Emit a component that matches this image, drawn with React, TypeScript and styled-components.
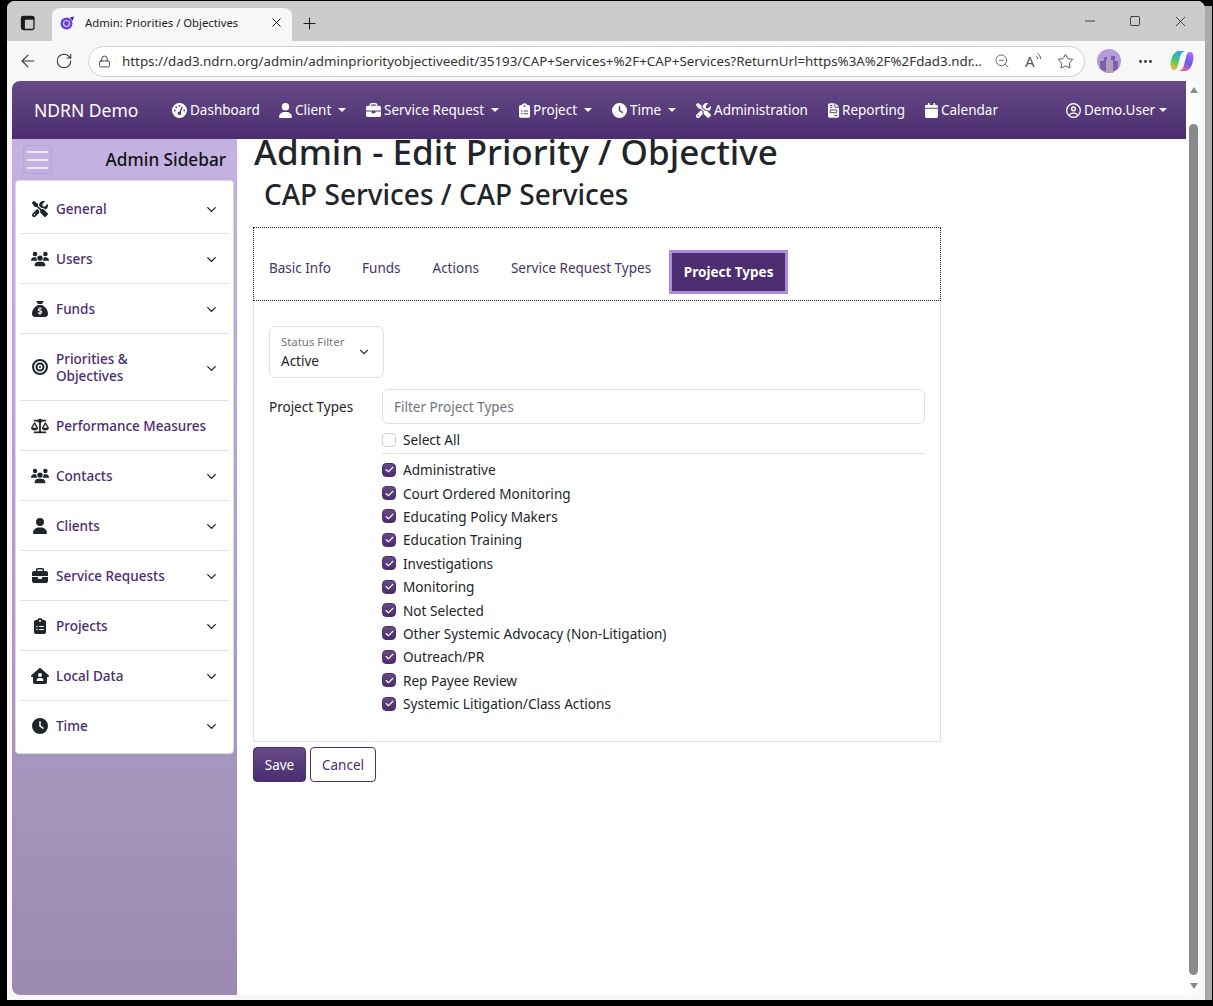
import React from "react";
import styled, { createGlobalStyle } from "styled-components";
import {
  FaGaugeHigh,
  FaUser,
  FaUsers,
  FaBriefcase,
  FaClipboardList,
  FaClock,
  FaScrewdriverWrench,
  FaFileInvoice,
  FaCalendar,
  FaRegCircleUser,
  FaBullseye,
  FaScaleBalanced,
  FaHouseUser,
  FaSackDollar,
  FaCheck,
} from "react-icons/fa6";
import {
  ArrowLeft,
  RotateCw,
  Lock,
  ZoomOut,
  Star,
  Plus,
  X,
  Minus,
  Square,
  ChevronDown,
  MoreHorizontal,
} from "lucide-react";

const FONT = `"Noto Sans", "Open Sans", sans-serif`;

const GlobalStyle = createGlobalStyle`
  html, body {
    margin: 0;
    height: 100%;
    overflow: hidden;
    background: #000;
  }
  body {
    font-family: ${FONT};
    color: #212529;
  }
  * { box-sizing: border-box; }
`;

const navItems = [
  { icon: <FaGaugeHigh />, label: "Dashboard", caret: false, width: 107, iconWidth: 15 },
  { icon: <FaUser />, label: "Client", caret: true, width: 87, iconWidth: 13 },
  { icon: <FaBriefcase />, label: "Service Request", caret: true, width: 153, iconWidth: 15 },
  { icon: <FaClipboardList />, label: "Project", caret: true, width: 93, iconWidth: 11 },
  { icon: <FaClock />, label: "Time", caret: true, width: 84, iconWidth: 15 },
  { icon: <FaScrewdriverWrench />, label: "Administration", caret: false, width: 132, iconWidth: 15 },
  { icon: <FaFileInvoice />, label: "Reporting", caret: false, width: 97, iconWidth: 11 },
  { icon: <FaCalendar />, label: "Calendar", caret: false, width: 90, iconWidth: 13 },
];

const sideItems = [
  { icon: <FaScrewdriverWrench />, label: "General", chevron: true },
  { icon: <FaUsers />, label: "Users", chevron: true },
  { icon: <FaSackDollar />, label: "Funds", chevron: true },
  { icon: <FaBullseye />, label: "Priorities & Objectives", chevron: true, tall: true },
  { icon: <FaScaleBalanced />, label: "Performance Measures", chevron: false },
  { icon: <FaUsers />, label: "Contacts", chevron: true },
  { icon: <FaUser />, label: "Clients", chevron: true },
  { icon: <FaBriefcase />, label: "Service Requests", chevron: true },
  { icon: <FaClipboardList />, label: "Projects", chevron: true },
  { icon: <FaHouseUser />, label: "Local Data", chevron: true },
  { icon: <FaClock />, label: "Time", chevron: true },
];

const projectTypes = [
  "Administrative",
  "Court Ordered Monitoring",
  "Educating Policy Makers",
  "Education Training",
  "Investigations",
  "Monitoring",
  "Not Selected",
  "Other Systemic Advocacy (Non-Litigation)",
  "Outreach/PR",
  "Rep Payee Review",
  "Systemic Litigation/Class Actions",
];

const App: React.FC = () => {
  return (
    <>
      <GlobalStyle />
      <Desktop>
        <BrowserWindow>
          <TabStrip>
            <TabActions>
              <svg width="16" height="16" viewBox="0 0 16 16" fill="none">
                <rect x="1.5" y="1.5" width="12.5" height="13" rx="2" stroke="#1b1b1b" strokeWidth="1.3" />
                <rect x="1.5" y="1.5" width="12.5" height="3.2" fill="#1b1b1b" />
                <rect x="1.5" y="1.5" width="3.4" height="13" fill="#1b1b1b" />
              </svg>
            </TabActions>
            <Tab>
              <svg width="16" height="16" viewBox="0 0 16 16">
                <circle cx="7.5" cy="8.5" r="6" fill="#6a3fd8" />
                <circle cx="7.5" cy="8.5" r="3" fill="none" stroke="#d7c8ff" strokeWidth="1.2" />
                <path d="M11 2.5 L15 1.5 L13.5 6 Z" fill="#3d1f8f" />
              </svg>
              <TabTitle>Admin: Priorities / Objectives</TabTitle>
              <X size={15} strokeWidth={1.6} color="#1b1b1b" />
            </Tab>
            <NewTab>
              <Plus size={19} strokeWidth={1.3} color="#1b1b1b" />
            </NewTab>
            <WindowButtons>
              <Minus size={16} strokeWidth={1.2} color="#1b1b1b" />
              <Square size={12} strokeWidth={1.6} color="#1b1b1b" />
              <X size={17} strokeWidth={1.1} color="#1b1b1b" />
            </WindowButtons>
          </TabStrip>
          <Toolbar>
            <ToolButton>
              <ArrowLeft size={20} strokeWidth={1.3} color="#333" />
            </ToolButton>
            <ToolButton>
              <RotateCw size={18} strokeWidth={1.4} color="#333" />
            </ToolButton>
            <AddressBar>
              <Lock size={13} strokeWidth={1.6} color="#333" />
              <Url>https://dad3.ndrn.org/admin/adminpriorityobjectiveedit/35193/CAP+Services+%2F+CAP+Services?ReturnUrl=https%3A%2F%2Fdad3.ndr...</Url>
              <AddressIcons>
                <ZoomOut size={16} strokeWidth={1.3} color="#555" />
                <ReadAloud>
                  A
                  <svg width="7" height="9" viewBox="0 0 7 9" fill="none" stroke="#555" strokeWidth="1">
                    <path d="M1 4c1 .5 1.5 1.5 1.5 3" />
                    <path d="M2.5 1.5c2 1 3 3 3 5.5" />
                  </svg>
                </ReadAloud>
                <Star size={17} strokeWidth={1.3} color="#444" />
              </AddressIcons>
            </AddressBar>
            <Avatar>
              <svg width="24" height="24" viewBox="0 0 24 24">
                <circle cx="12" cy="12" r="12" fill="#b49ad6" />
                <path d="M3 12h4V8h3v3h4V7h4v5h3v7a12 12 0 0 1-18 0z" fill="#7d5fa8" />
                <rect x="9" y="11" width="7" height="13" fill="#b59fc0" />
              </svg>
            </Avatar>
            <MoreHorizontal size={17} strokeWidth={2} color="#333" />
            <Copilot>
              <svg width="24" height="24" viewBox="0 0 24 24">
                <defs>
                  <linearGradient id="copLeft" x1="0.6" y1="0" x2="0.3" y2="1">
                    <stop offset="0" stopColor="#27a5f0" />
                    <stop offset="0.5" stopColor="#45c96b" />
                    <stop offset="1" stopColor="#f4b93e" />
                  </linearGradient>
                  <linearGradient id="copRight" x1="0.7" y1="0" x2="0.3" y2="1">
                    <stop offset="0" stopColor="#b06af0" />
                    <stop offset="0.5" stopColor="#6a5cf0" />
                    <stop offset="1" stopColor="#f05fa0" />
                  </linearGradient>
                </defs>
                <path d="M8 2h7c-3 1-4.5 3-5 6l-2 8c-.5 3-2 5-4 5-2 0-3.5-2-3.5-4.5C.5 11 3 3 8 2z" fill="url(#copLeft)" />
                <path d="M16 22H9c3-1 4.5-3 5-6l2-8c.5-3 2-5 4-5 2 0 3.5 2 3.5 4.5C23.5 13 21 21 16 22z" fill="url(#copRight)" />
              </svg>
            </Copilot>
          </Toolbar>
          <Page>
            <PageColumn>
              <NavBar>
                <Brand>NDRN Demo</Brand>
                <NavList>
                  {navItems.map((item) => (
                    <NavItem key={item.label} $width={item.width} $iconWidth={item.iconWidth}>
                      {item.icon}
                      <span>{item.label}</span>
                      {item.caret && <Caret $gap={4} />}
                    </NavItem>
                  ))}
                </NavList>
                <UserMenu>
                  <FaRegCircleUser />
                  <span>Demo.User</span>
                  <Caret $gap={1} />
                </UserMenu>
              </NavBar>
              <Body>
                <Sidebar>
                  <SidebarHead>
                    <Burger>
                      <i />
                      <i />
                      <i />
                    </Burger>
                    <SidebarTitle>Admin Sidebar</SidebarTitle>
                  </SidebarHead>
                  <SideCard>
                    {sideItems.map((item) => (
                      <SideItem key={item.label} $tall={!!item.tall}>
                        <SideIcon>{item.icon}</SideIcon>
                        <SideLabel $chevron={item.chevron}>{item.label}</SideLabel>
                        {item.chevron && <ChevronDown size={15} strokeWidth={2.2} color="#212529" />}
                      </SideItem>
                    ))}
                  </SideCard>
                </Sidebar>
                <Main>
                  <Title>Admin - Edit Priority / Objective</Title>
                  <Subtitle>CAP Services / CAP Services</Subtitle>
                  <TabBox>
                    <PageTab>Basic Info</PageTab>
                    <PageTab>Funds</PageTab>
                    <PageTab>Actions</PageTab>
                    <PageTab>Service Request Types</PageTab>
                    <ActiveTab>Project Types</ActiveTab>
                  </TabBox>
                  <Panel>
                    <SelectBox>
                      <SelectText>
                        <SelectLabel>Status Filter</SelectLabel>
                        <SelectValue>Active</SelectValue>
                      </SelectText>
                      <ChevronDown size={14} strokeWidth={2} color="#343a40" />
                    </SelectBox>
                    <TypesRow>
                      <TypesLabel>Project Types</TypesLabel>
                      <TypesColumn>
                        <FilterInput placeholder="Filter Project Types" />
                        <SelectAllRow>
                          <CheckBox $checked={false} />
                          <CheckText>Select All</CheckText>
                        </SelectAllRow>
                        <CheckList>
                          {projectTypes.map((name) => (
                            <CheckRow key={name}>
                              <CheckBox $checked>
                                <FaCheck size={9} color="#fff" />
                              </CheckBox>
                              <CheckText>{name}</CheckText>
                            </CheckRow>
                          ))}
                        </CheckList>
                      </TypesColumn>
                    </TypesRow>
                  </Panel>
                  <Actions>
                    <SaveButton>Save</SaveButton>
                    <CancelButton>Cancel</CancelButton>
                  </Actions>
                </Main>
              </Body>
            </PageColumn>
            <ScrollBar>
              <ArrowUp />
              <Thumb />
              <ArrowDown />
            </ScrollBar>
          </Page>
        </BrowserWindow>
        <WindowEdge />
      </Desktop>
    </>
  );
};

const Desktop = styled.div`
  display: flex;
  height: 1000px;
  padding-left: 7px;
`;

const BrowserWindow = styled.div`
  width: 1198px;
  height: 999px;
  margin-top: 1px;
  display: flex;
  flex-direction: column;
  background: #f7f7f7;
  border-radius: 8px 8px 0 0;
  overflow: hidden;
`;

const WindowEdge = styled.div`
  width: 7px;
  margin-top: 6px;
  background: #a9a9a9;
`;

const TabStrip = styled.div`
  height: 40px;
  flex: none;
  display: flex;
  align-items: flex-end;
  background: #cccccc;
`;

const TabActions = styled.div`
  width: 45px;
  height: 33px;
  display: flex;
  align-items: center;
  justify-content: center;
  padding: 0 4px 3px 0;
`;

const Tab = styled.div`
  width: 240px;
  height: 33px;
  display: flex;
  align-items: center;
  gap: 10px;
  padding: 0 8px 4px 7px;
  background: #f7f7f7;
  border-radius: 8px 8px 0 0;
  svg {
    flex: none;
  }
`;

const TabTitle = styled.span`
  flex: 1;
  font-size: 11.3px;
  color: #1b1b1b;
  white-space: nowrap;
`;

const NewTab = styled.div`
  height: 33px;
  display: flex;
  align-items: center;
  padding: 0 0 3px 8px;
`;

const WindowButtons = styled.div`
  margin-left: auto;
  height: 40px;
  width: 123px;
  display: flex;
  align-items: center;
  justify-content: space-between;
  padding: 0 16px 0 0;
`;

const Toolbar = styled.div`
  height: 40px;
  flex: none;
  display: flex;
  align-items: center;
  background: #f7f7f7;
  padding: 0 7px 0 3px;
`;

const ToolButton = styled.div`
  width: 36px;
  display: flex;
  justify-content: center;
`;

const AddressBar = styled.div`
  width: 997px;
  height: 31px;
  margin: 0 12px 0 6px;
  display: flex;
  align-items: center;
  gap: 11px;
  padding: 0 10px 0 9px;
  background: #fff;
  border: 1px solid #cfcfcf;
  border-radius: 16px;
`;

const Url = styled.span`
  flex: 1;
  font-size: 13.35px;
  color: #333;
  white-space: nowrap;
  overflow: hidden;
`;

const AddressIcons = styled.div`
  display: flex;
  align-items: center;
  gap: 15px;
  svg {
    flex: none;
  }
`;

const ReadAloud = styled.span`
  display: flex;
  align-items: flex-start;
  width: 17px;
  font-size: 15px;
  line-height: 18px;
  color: #555;
`;

const Avatar = styled.div`
  height: 24px;
  margin: 0 16px 0 0;
`;

const Copilot = styled.div`
  height: 24px;
  margin-left: 16px;
`;

const Page = styled.div`
  flex: 1;
  display: flex;
  min-height: 0;
  margin: 0 6px 5px 5px;
  background: #fff;
  border-radius: 8px 8px 0 8px;
  overflow: hidden;
`;

const PageColumn = styled.div`
  flex: 1;
  display: flex;
  flex-direction: column;
  min-width: 0;
`;

const NavBar = styled.div`
  height: 58px;
  flex: none;
  display: flex;
  align-items: center;
  padding: 0 21px 0 22px;
  background: linear-gradient(180deg, #664a85, #4b2d70);
  color: #fff;
`;

const Brand = styled.div`
  width: 138px;
  font-size: 17.5px;
`;

const NavList = styled.div`
  display: flex;
  align-items: center;
`;

const NavItem = styled.div<{ $width: number; $iconWidth?: number }>`
  width: ${(p) => p.$width}px;
  display: flex;
  align-items: center;
  gap: 3px;
  font-size: 13.5px;
  white-space: nowrap;
  svg {
    height: 15px;
    width: ${(p) => p.$iconWidth ?? 15}px;
    flex: none;
  }
`;

const Caret = styled.i<{ $gap: number }>`
  display: inline-block;
  margin-left: ${(p) => p.$gap}px;
  border-top: 4px solid #fff;
  border-left: 4px solid transparent;
  border-right: 4px solid transparent;
`;

const UserMenu = styled(NavItem).attrs({ $width: 99 })`
  margin-left: auto;
`;

const Body = styled.div`
  flex: 1;
  display: flex;
  min-height: 0;
`;

const Sidebar = styled.aside`
  width: 225px;
  flex: none;
  background: linear-gradient(180deg, #c5b2e2, #9b8bb0);
`;

const SidebarHead = styled.div`
  height: 41px;
  display: flex;
  align-items: center;
  justify-content: space-between;
  padding: 0 11px 0 11px;
`;

const Burger = styled.div`
  width: 29px;
  height: 29px;
  display: flex;
  flex-direction: column;
  justify-content: center;
  gap: 6px;
  padding: 0 3px;
  border: 1px solid #b7a3d6;
  border-radius: 4px;
  i {
    display: block;
    height: 2px;
    background: #efe9f7;
  }
`;

const SidebarTitle = styled.div`
  font-size: 17.2px;
  font-weight: 500;
  color: #111;
`;

const SideCard = styled.div`
  width: 219px;
  margin-left: 3px;
  padding: 3px 4px 2px;
  background: #fff;
  border: 1px solid #ded8e8;
  border-radius: 4px;
`;

const SideItem = styled.div<{ $tall: boolean }>`
  height: ${(p) => (p.$tall ? 67 : 50)}px;
  display: flex;
  align-items: center;
  padding: 2px 10px 0 11px;
  border-bottom: 1px solid #dee2e6;
  &:last-child {
    padding-top: 1px;
    border-bottom: 0;
  }
`;

const SideIcon = styled.span`
  width: 25px;
  flex: none;
  display: flex;
  justify-content: flex-start;
  color: #212529;
  margin-top: -2px;
  svg {
    height: 16px;
    width: 18px;
  }
`;

const SideLabel = styled.span<{ $chevron: boolean }>`
  flex: 1;
  font-size: 13.5px;
  font-weight: 500;
  line-height: 17px;
  color: #4b2d70;
  padding-right: ${(p) => (p.$chevron ? 30 : 0)}px;
  white-space: ${(p) => (p.$chevron ? "normal" : "nowrap")};
`;

const Main = styled.main`
  flex: 1;
  min-width: 0;
  height: 100%;
  padding: 0 0 0 16px;
  overflow: hidden;
`;

const Title = styled.h1`
  margin: -13px 0 0 1px;
  height: 52px;
  font-size: 35px;
  line-height: 52px;
  font-weight: 500;
  color: #212529;
  white-space: nowrap;
`;

const Subtitle = styled.h2`
  margin: -3px 0 13px 11px;
  height: 39px;
  font-size: 28px;
  line-height: 39px;
  font-weight: 500;
  color: #212529;
`;

const TabBox = styled.div`
  width: 688px;
  height: 74px;
  display: flex;
  align-items: center;
  padding: 0 0 0 15px;
  border: 1px dotted #212529;
`;

const PageTab = styled.div`
  margin: 8px 32px 0 0;
  font-size: 13.5px;
  color: #44336a;
  white-space: nowrap;
  &:first-child {
    margin-right: 31px;
  }
  &:nth-child(4) {
    margin-right: 18px;
  }
`;

const ActiveTab = styled.div`
  width: 119px;
  height: 44px;
  margin-top: 16px;
  display: flex;
  align-items: center;
  justify-content: center;
  font-size: 13.5px;
  font-weight: 700;
  color: #fff;
  background: #4b2d70;
  border: 3px solid #a98ddc;
`;

const Panel = styled.div`
  width: 688px;
  height: 441px;
  padding: 25px 15px 0;
  border: 1px solid #dee2e6;
  border-top: 0;
`;

const SelectBox = styled.div`
  width: 115px;
  height: 52px;
  display: flex;
  align-items: center;
  justify-content: space-between;
  padding: 0 12px 0 11px;
  border: 1px solid #dee2e6;
  border-radius: 6px;
`;

const SelectText = styled.div`
  display: flex;
  flex-direction: column;
  gap: 3px;
`;

const SelectLabel = styled.span`
  font-size: 11.4px;
  color: #777;
`;

const SelectValue = styled.span`
  font-size: 13.5px;
  color: #212529;
`;

const TypesRow = styled.div`
  display: flex;
  margin-top: 11px;
`;

const TypesLabel = styled.div`
  width: 113px;
  flex: none;
  padding-top: 9px;
  font-size: 13.5px;
  color: #212529;
`;

const TypesColumn = styled.div`
  width: 543px;
`;

const FilterInput = styled.input`
  width: 100%;
  height: 35px;
  padding: 0 11px;
  border: 1px solid #dee2e6;
  border-radius: 6px;
  font-family: ${FONT};
  font-size: 13.5px;
  outline: none;
  &::placeholder {
    color: #6c757d;
    opacity: 1;
  }
`;

const SelectAllRow = styled.div`
  height: 30px;
  display: flex;
  align-items: center;
  gap: 7px;
  padding-top: 2px;
  border-bottom: 1px solid #dee2e6;
`;

const CheckList = styled.div`
  padding-top: 4px;
`;

const CheckRow = styled.div`
  height: 23.4px;
  display: flex;
  align-items: center;
  gap: 7px;
`;

const CheckBox = styled.span<{ $checked: boolean }>`
  width: 14px;
  height: 14px;
  flex: none;
  display: flex;
  align-items: center;
  justify-content: center;
  border-radius: 4px;
  border: 1px solid ${(p) => (p.$checked ? "#4b2d70" : "#ced4da")};
  background: ${(p) => (p.$checked ? "linear-gradient(180deg, #664a85, #4b2d70)" : "#fff")};
`;

const CheckText = styled.span`
  font-size: 13.6px;
  color: #212529;
  white-space: nowrap;
`;

const Actions = styled.div`
  display: flex;
  gap: 4px;
  margin-top: 5px;
`;

const SaveButton = styled.button`
  width: 53px;
  height: 35px;
  border: 1px solid #4b2d70;
  border-radius: 4px;
  background: linear-gradient(180deg, #664a85, #4b2d70);
  color: #fff;
  font-family: ${FONT};
  font-size: 13.5px;
`;

const CancelButton = styled.button`
  width: 66px;
  height: 35px;
  border: 1px solid #4b2d70;
  border-radius: 4px;
  background: #fff;
  color: #4b2d70;
  font-family: ${FONT};
  font-size: 13.5px;
`;

const ScrollBar = styled.div`
  width: 13px;
  flex: none;
  display: flex;
  flex-direction: column;
  align-items: center;
  padding: 6px 0 0 2px;
  background: #fdfdfd;
`;

const ArrowUp = styled.i`
  border-bottom: 6px solid #8a8a8a;
  border-left: 4.5px solid transparent;
  border-right: 4.5px solid transparent;
`;

const Thumb = styled.div`
  width: 9px;
  height: 851px;
  margin: 31px 0 8px;
  border-radius: 5px;
  background: #8a8a8a;
`;

const ArrowDown = styled.i`
  border-top: 6px solid #8a8a8a;
  border-left: 4.5px solid transparent;
  border-right: 4.5px solid transparent;
`;

export default App;
